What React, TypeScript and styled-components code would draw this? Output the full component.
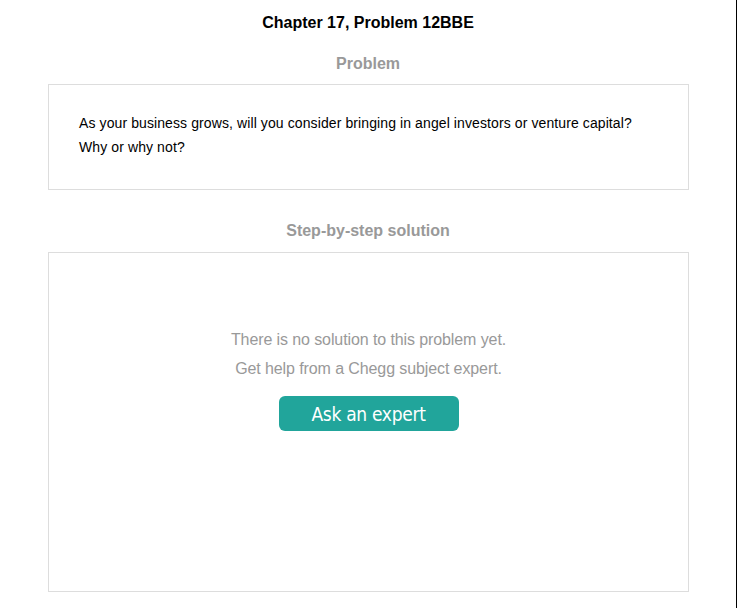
import React from "react";
import styled, { createGlobalStyle } from "styled-components";

const Global = createGlobalStyle`
  html, body { margin: 0; padding: 0; background: #fff; }
  body { font-family: "Liberation Sans", Arial, sans-serif; }
`;

const Page = styled.div`
  width: 737px;
  min-height: 608px;
  box-sizing: border-box;
  border-right: 1px solid #000;
  padding: 13px 48px 0 48px;
  display: flex;
  flex-direction: column;
`;

const Title = styled.h1`
  margin: 0;
  font-size: 16px;
  line-height: 20px;
  font-weight: bold;
  color: #000;
  text-align: center;
`;

const SectionHeading = styled.h2<{ $top: number; $bottom: number }>`
  margin: ${(p) => p.$top}px 0 ${(p) => p.$bottom}px;
  font-size: 16px;
  line-height: 20px;
  font-weight: bold;
  color: #999;
  text-align: center;
`;

const Card = styled.div<{ $height: number }>`
  box-sizing: border-box;
  width: 641px;
  height: ${(p) => p.$height}px;
  border: 1px solid #ddd;
`;

const ProblemText = styled.p`
  margin: 0;
  padding: 26px 30px 0;
  font-size: 14px;
  line-height: 24px;
  letter-spacing: 0.1px;
  color: #000;
`;

const Empty = styled.div`
  display: flex;
  flex-direction: column;
  align-items: center;
  padding-top: 72px;
`;

const Message = styled.p`
  margin: 0;
  font-size: 16px;
  line-height: 29px;
  letter-spacing: -0.1px;
  color: #999;
`;

const AskButton = styled.button`
  margin-top: 13px;
  width: 180px;
  height: 35px;
  border: none;
  border-radius: 6px;
  background: #21a59b;
  color: #fff;
  font-family: "DejaVu Sans Condensed", "DejaVu Sans", Tahoma, sans-serif;
  font-stretch: condensed;
  font-size: 19px;
  letter-spacing: -0.3px;
  cursor: pointer;
`;

export default function App() {
  return (
    <>
      <Global />
      <Page>
        <Title>Chapter 17, Problem 12BBE</Title>
        <SectionHeading $top={21} $bottom={10}>Problem</SectionHeading>
        <Card $height={106}>
          <ProblemText>
            As your business grows, will you consider bringing in angel investors or venture capital?
            <br />
            Why or why not?
          </ProblemText>
        </Card>
        <SectionHeading $top={31} $bottom={11}>Step-by-step solution</SectionHeading>
        <Card $height={340}>
          <Empty>
            <Message>There is no solution to this problem yet.</Message>
            <Message>Get help from a Chegg subject expert.</Message>
            <AskButton>Ask an expert</AskButton>
          </Empty>
        </Card>
      </Page>
    </>
  );
}
